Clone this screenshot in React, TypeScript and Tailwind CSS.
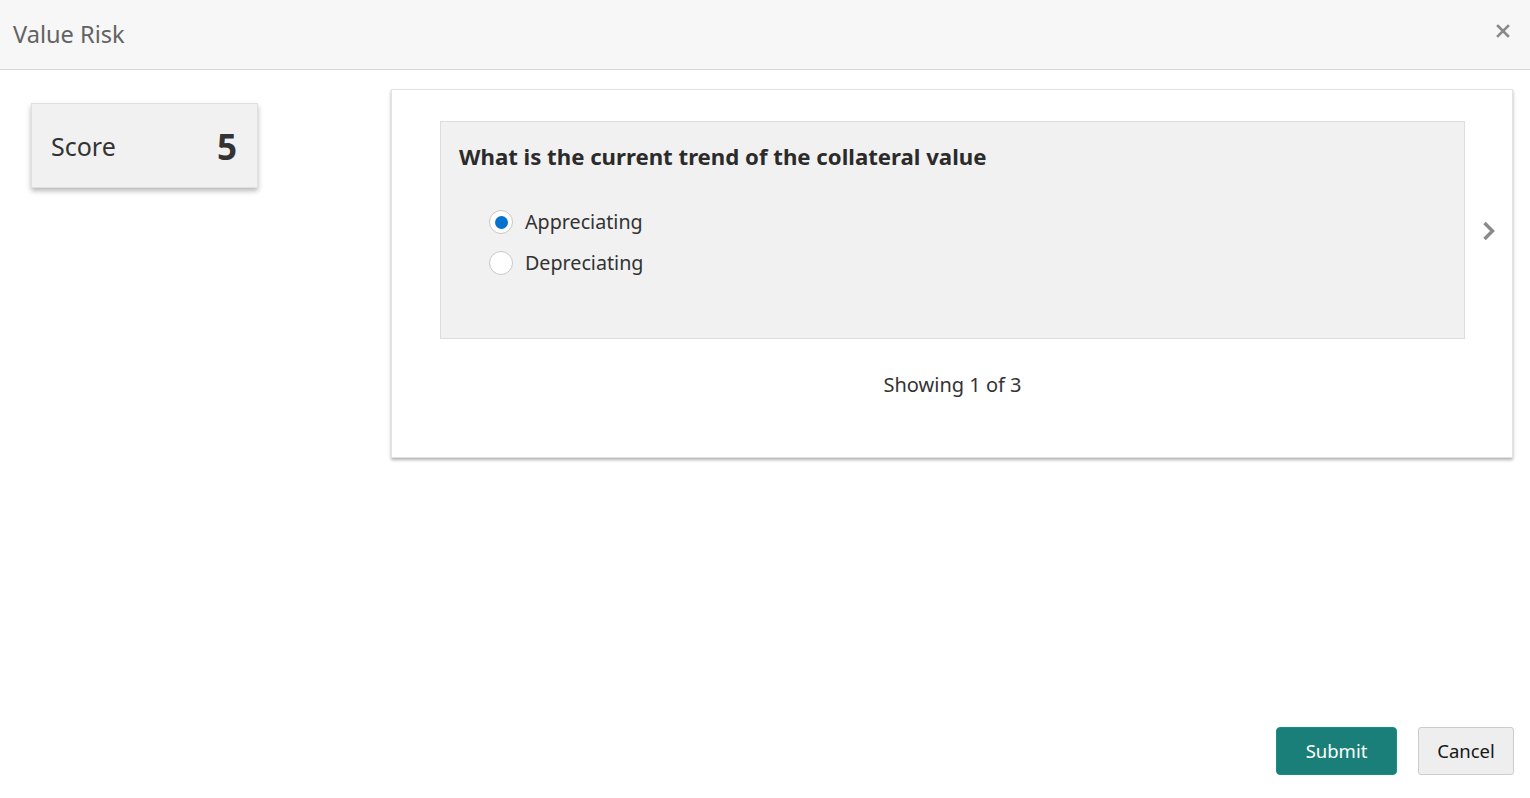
import React from "react";

export default function App() {
  return (
    <div className="flex h-[798px] w-full flex-col bg-white text-[#333] [font-family:'Noto_Sans',sans-serif]">
      <div className="flex h-[70px] shrink-0 items-center justify-between border-b border-[#d6d6d6] bg-[#f7f7f7] pl-[13px] pr-[20px]">
        <span className="text-[23.6px] text-[#636363]">Value Risk</span>
        <svg width="14" height="14" viewBox="0 0 14 14" className="mb-[8px]">
          <path d="M2 2 L12 12 M12 2 L2 12" stroke="#8a8a8a" strokeWidth="2.6" strokeLinecap="square" />
        </svg>
      </div>
      <div className="flex pt-[19px]">
        <div className="w-[391px] shrink-0 pl-[31px] pt-[14px]">
          <div className="flex h-[85px] w-[227px] items-center justify-between border border-[#e0e0e0] bg-[#f1f1f1] pl-[19px] pr-[20px] pt-[3px] shadow-[0_3px_5px_rgba(0,0,0,0.28)]">
            <span className="text-[25px]">Score</span>
            <span className="text-[35px] font-bold">5</span>
          </div>
        </div>
        <div className="flex h-[369px] w-[1122px] flex-col border border-[#e2e2e2] bg-white pl-[48px] pt-[31px] shadow-[0_2px_3px_rgba(0,0,0,0.3)]">
          <div className="flex items-center">
            <div className="h-[218px] w-[1025px] border border-[#dddddd] bg-[#f1f1f1] pl-[18px] pt-[19px]">
              <div className="text-[22.2px] font-bold leading-[32px] text-[#2b2b2b]">What is the current trend of the collateral value</div>
              <div className="mt-[37px] flex flex-col gap-[17px] pl-[30px]">
                <label className="flex items-center gap-[12px]">
                  <span className="flex h-[24px] w-[24px] items-center justify-center rounded-full border border-[#c8c8c8] bg-white">
                    <span className="h-[13px] w-[13px] rounded-full bg-[#0572ce]" />
                  </span>
                  <span className="text-[19.7px] leading-[24px]">Appreciating</span>
                </label>
                <label className="flex items-center gap-[12px]">
                  <span className="h-[24px] w-[24px] rounded-full border border-[#c8c8c8] bg-white" />
                  <span className="text-[19.7px] leading-[24px]">Depreciating</span>
                </label>
              </div>
            </div>
            <div className="flex flex-1 justify-center pl-[1px] pt-[2px]">
              <svg width="16" height="22" viewBox="0 0 16 22">
                <path d="M3.5 3 L11.5 11 L3.5 19" fill="none" stroke="#8a8a8a" strokeWidth="3.4" />
              </svg>
            </div>
          </div>
          <div className="mt-[31px] w-[1025px] text-center text-[20px]">Showing 1 of 3</div>
        </div>
      </div>
      <div className="mt-auto flex justify-end gap-[21px] pb-[23px] pr-[16px]">
        <button className="h-[48px] w-[121px] rounded-[4px] border border-[#14928a] bg-[#1b7f79] text-[18.5px] text-white">Submit</button>
        <button className="h-[48px] w-[96px] rounded-[3px] border border-[#cccccc] bg-[#eeeeee] text-[18.5px] text-[#161616]">Cancel</button>
      </div>
    </div>
  );
}
